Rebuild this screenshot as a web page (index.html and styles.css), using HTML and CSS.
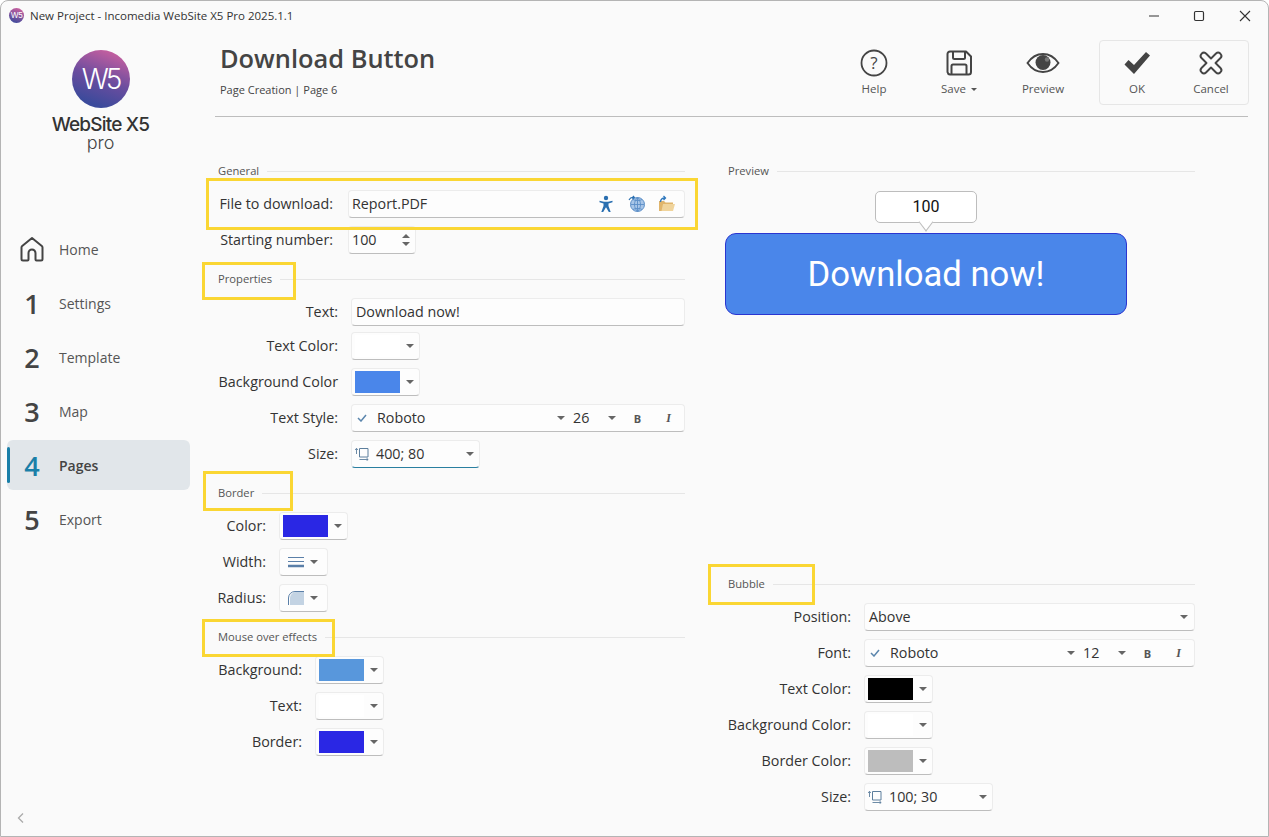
FILE: index.html
```html
<!DOCTYPE html>
<html lang="en">
<head>
<meta charset="utf-8">
<title>New Project - Incomedia WebSite X5 Pro 2025.1.1</title>
<link rel="stylesheet" href="styles.css">
</head>
<body>
<div class="window">
  <div class="titlebar">
    <span class="app-icon">W5</span>
    <span class="app-title">New Project - Incomedia WebSite X5 Pro 2025.1.1</span>
    <div class="win-controls">
      <svg class="win-btn win-min" width="12" height="12" viewBox="0 0 12 12"><path d="M1 6h10" stroke="#333" stroke-width="1.2"/></svg>
      <svg class="win-btn win-max" width="12" height="12" viewBox="0 0 12 12"><rect x="1.5" y="1.5" width="9" height="9" rx="1.2" fill="none" stroke="#333" stroke-width="1.2"/></svg>
      <svg class="win-btn win-close" width="12" height="12" viewBox="0 0 12 12"><path d="M1 1l10 10M11 1L1 11" stroke="#333" stroke-width="1.1"/></svg>
    </div>
  </div>
  <div class="body">
    <aside class="sidebar">
      <div class="logo">
        <div class="logo-mark">W5</div>
        <div class="logo-name">WebSite X5</div>
        <div class="logo-pro">pro</div>
      </div>
      <nav class="nav">
        <div class="nav-item"><span class="nav-num"><svg width="28" height="28" viewBox="0 0 28 28"><path d="M5 25.5h4.5a1 1 0 0 0 1-1V18a3.5 3.5 0 0 1 7 0v6.500a1 1 0 0 0 1 1H23a1.500 1.500 0 0 0 1.500-1.500V12.500a2 2 0 0 0-.7-1.500L14 3 4.200 11a2 2 0 0 0-.7 1.500V24A1.500 1.500 0 0 0 5 25.500z" fill="none" stroke="#444" stroke-width="2" stroke-linejoin="round"/></svg></span><span class="nav-label">Home</span></div>
        <div class="nav-item"><span class="nav-num">1</span><span class="nav-label">Settings</span></div>
        <div class="nav-item"><span class="nav-num">2</span><span class="nav-label">Template</span></div>
        <div class="nav-item"><span class="nav-num">3</span><span class="nav-label">Map</span></div>
        <div class="nav-item nav-active"><span class="nav-num">4</span><span class="nav-label">Pages</span></div>
        <div class="nav-item"><span class="nav-num">5</span><span class="nav-label">Export</span></div>
      </nav>
      <svg class="back" width="8" height="12" viewBox="0 0 8 12"><path d="M6 1.500L1.500 6 6 10.500" fill="none" stroke="#aaa" stroke-width="1.300"/></svg>
    </aside>
    <main class="main">
      <header class="header">
        <div class="heading">
          <h1 class="title">Download Button</h1>
          <div class="subtitle">Page Creation | Page 6</div>
        </div>
        <div class="toolbar">
          <div class="tool tool-help">
            <svg width="32" height="32" viewBox="0 0 32 32"><circle cx="16" cy="16" r="12.500" fill="none" stroke="#444" stroke-width="1.800"/><text x="16" y="22" text-anchor="middle" class="help-q">?</text></svg>
            <span class="tool-label">Help</span>
          </div>
          <div class="tool">
            <svg width="32" height="32" viewBox="0 0 32 32"><path d="M7 4.500h16l5 5V25a2.500 2.500 0 0 1-2.500 2.500h-18.500A3 3 0 0 1 4.500 25V7A2.500 2.500 0 0 1 7 4.500z" fill="none" stroke="#444" stroke-width="2" stroke-linejoin="round"/><path d="M10 4.500v6a1.500 1.500 0 0 0 1.500 1.500h9a1.500 1.500 0 0 0 1.500-1.500v-6M8.500 27.500V19a1.500 1.500 0 0 1 1.500-1.500h12a1.500 1.500 0 0 1 1.500 1.500v8.500" fill="none" stroke="#444" stroke-width="2"/></svg>
            <span class="tool-label">Save <span class="mini-caret"></span></span>
          </div>
          <div class="tool">
            <svg width="34" height="32" viewBox="0 0 34 32"><path d="M1.500 16C6 9.500 11 7 17 7s11 2.500 15.500 9C28 22.500 23 25 17 25S6 22.500 1.500 16z" fill="none" stroke="#444" stroke-width="1.900"/><circle cx="17" cy="15.500" r="7.500" fill="#444"/><circle cx="21" cy="12.500" r="2.200" fill="#777"/></svg>
            <span class="tool-label">Preview</span>
          </div>
          <div class="tool-panel">
            <div class="tool tool-small">
              <svg width="32" height="32" viewBox="0 0 32 32"><path d="M3.500 17.500l4-4.500 5.500 5L25 5l4 3.500L13 27z" fill="#444"/></svg>
              <span class="tool-label">OK</span>
            </div>
            <div class="tool tool-small">
              <svg width="32" height="32" viewBox="0 0 32 32"><path d="M9 5.500a3 3 0 0 1 2 1L16 11.500l5-5a3 3 0 0 1 4.200 0l.3.300a3 3 0 0 1 0 4.200L20.500 16l5 5a3 3 0 0 1 0 4.200l-.3.300a3 3 0 0 1-4.200 0l-5-5-5 5a3 3 0 0 1-4.200 0l-.3-.3a3 3 0 0 1 0-4.200l5-5-5-5a3 3 0 0 1 0-4.200l.3-.3a3 3 0 0 1 2.200-1z" fill="none" stroke="#444" stroke-width="1.900" stroke-linejoin="round"/></svg>
              <span class="tool-label">Cancel</span>
            </div>
          </div>
        </div>
      </header>

      <div class="form">
        <div class="col">
          <section class="section">
            <div class="sec-title"><span>General</span></div>
            <div class="rows rows-general">
              <label class="lbl">File to download:</label>
              <div class="ctrl ctrl-wide ctrl-file">
                <span class="val">Report.PDF</span>
                <span class="file-icons">
                  <svg class="ico-person" width="16" height="18" viewBox="0 0 16 18"><circle cx="8" cy="3" r="2.200" fill="#2a6fb0"/><path d="M1.500 5.800L6 6.800h4l4.500-1v1.500L10.500 8.500V11l2.200 6h-1.900L8 12.300 5.200 17H3.300l2.200-6V8.500L1.500 7.300z" fill="#2a6fb0"/></svg>
                  <svg width="18" height="18" viewBox="0 0 18 18"><circle cx="9.500" cy="9.500" r="7" fill="#a9c6e8" stroke="#5c8fc7"/><path d="M3 9.500h13M9.500 2.500v14M5 4.500c2.500 1.500 6.500 1.500 9 0M5 14.500c2.500-1.500 6.500-1.500 9 0M9.500 2.500c-4 4-4 10 0 14M9.500 2.500c4 4 4 10 0 14" fill="none" stroke="#5c8fc7" stroke-width=".9"/><path d="M1 5c1-2 3-3 5-2.500M5 1l1.300 1.500L4.500 4" fill="none" stroke="#2a6fb0" stroke-width="1.200"/></svg>
                  <svg width="18" height="18" viewBox="0 0 18 18"><path d="M1 16V6h5l1.500 1.500H15V16z" fill="#e0b56c"/><path d="M3.500 16L5 9h12l-2 7z" fill="#f0d49c"/><path d="M2.500 7c0-2.500 1.500-4 4.500-4M5.500 1L7.500 3 5.500 5" fill="none" stroke="#2f78bd" stroke-width="1.300"/></svg>
                </span>
              </div>
              <label class="lbl">Starting number:</label>
              <div class="ctrl ctrl-spin">
                <span class="val">100</span>
                <span class="spin"><i class="arrow-up"></i><i class="caret caret-spin"></i></span>
              </div>
            </div>
          </section>

          <section class="section">
            <div class="sec-title"><span>Properties</span></div>
            <div class="rows rows-props">
              <label class="lbl row-tight">Text:</label>
              <div class="ctrl ctrl-wide ctrl-text row-tight"><span class="val">Download now!</span></div>
              <label class="lbl">Text Color:</label>
              <div class="ctrl ctrl-color"><span class="swatch sw-white"></span><i class="caret"></i></div>
              <label class="lbl">Background Color</label>
              <div class="ctrl ctrl-color"><span class="swatch sw-blue"></span><i class="caret"></i></div>
              <label class="lbl">Text Style:</label>
              <div class="ctrl ctrl-wide ctrl-font">
                <svg class="chk" width="10" height="8" viewBox="0 0 10 8"><path d="M1 4l3 3 5-6" fill="none" stroke="#5b86ad" stroke-width="1.500"/></svg>
                <span class="val font-name">Roboto</span><i class="caret"></i>
                <span class="val font-size">26</span><i class="caret"></i>
                <b class="fmt fmt-b">B</b><i class="fmt fmt-i">I</i>
              </div>
              <label class="lbl">Size:</label>
              <div class="ctrl ctrl-size ctrl-focus">
                <svg class="size-ico" width="14" height="14" viewBox="0 0 14 14"><path d="M4.500 1.500h8.500v8.500H4.500z" fill="none" stroke="#5d7f9d"/><path d="M1.500 7V1.500M.2 3L1.500 1.300 2.800 3M4.500 12.500H13M11.500 11.200l1.700 1.300-1.700 1.300" fill="none" stroke="#5d7f9d" stroke-width=".9"/></svg>
                <span class="val">400; 80</span><i class="caret"></i>
              </div>
            </div>
          </section>

          <section class="section">
            <div class="sec-title"><span>Border</span></div>
            <div class="rows rows-border">
              <label class="lbl">Color:</label>
              <div class="ctrl ctrl-color"><span class="swatch sw-indigo"></span><i class="caret"></i></div>
              <label class="lbl">Width:</label>
              <div class="ctrl ctrl-icon">
                <svg width="16" height="12" viewBox="0 0 16 12"><path d="M0 1.500h16M0 5.500h16" stroke="#5a7fa8"/><path d="M0 10h16" stroke="#5a7fa8" stroke-width="2.500"/></svg>
                <i class="caret"></i>
              </div>
              <label class="lbl">Radius:</label>
              <div class="ctrl ctrl-icon">
                <svg width="16" height="14" viewBox="0 0 16 14"><path d="M2 14V7a6 6 0 0 1 6-6h8v13z" fill="#c3d3e3"/><path d="M.5 14V7A6.500 6.500 0 0 1 7 .5h9" fill="none" stroke="#5a7fa8"/></svg>
                <i class="caret"></i>
              </div>
            </div>
          </section>

          <section class="section">
            <div class="sec-title"><span>Mouse over effects</span></div>
            <div class="rows rows-mouse">
              <label class="lbl">Background:</label>
              <div class="ctrl ctrl-color"><span class="swatch sw-sky"></span><i class="caret"></i></div>
              <label class="lbl">Text:</label>
              <div class="ctrl ctrl-color"><span class="swatch sw-white"></span><i class="caret"></i></div>
              <label class="lbl">Border:</label>
              <div class="ctrl ctrl-color"><span class="swatch sw-indigo"></span><i class="caret"></i></div>
            </div>
          </section>
        </div>

        <div class="col">
          <section class="section section-preview">
            <div class="sec-title"><span>Preview</span></div>
            <div class="preview">
              <div class="bubble">100</div>
              <div class="dl-button">Download now!</div>
            </div>
          </section>

          <section class="section">
            <div class="sec-title"><span>Bubble</span></div>
            <div class="rows rows-bubble">
              <label class="lbl">Position:</label>
              <div class="ctrl ctrl-wide ctrl-select"><span class="val">Above</span><i class="caret"></i></div>
              <label class="lbl">Font:</label>
              <div class="ctrl ctrl-wide ctrl-font">
                <svg class="chk" width="10" height="8" viewBox="0 0 10 8"><path d="M1 4l3 3 5-6" fill="none" stroke="#5b86ad" stroke-width="1.500"/></svg>
                <span class="val font-name">Roboto</span><i class="caret"></i>
                <span class="val font-size">12</span><i class="caret"></i>
                <b class="fmt fmt-b">B</b><i class="fmt fmt-i">I</i>
              </div>
              <label class="lbl">Text Color:</label>
              <div class="ctrl ctrl-color"><span class="swatch sw-black"></span><i class="caret"></i></div>
              <label class="lbl">Background Color:</label>
              <div class="ctrl ctrl-color"><span class="swatch sw-white"></span><i class="caret"></i></div>
              <label class="lbl">Border Color:</label>
              <div class="ctrl ctrl-color"><span class="swatch sw-gray"></span><i class="caret"></i></div>
              <label class="lbl">Size:</label>
              <div class="ctrl ctrl-size">
                <svg class="size-ico" width="14" height="14" viewBox="0 0 14 14"><path d="M4.500 1.500h8.500v8.500H4.500z" fill="none" stroke="#5d7f9d"/><path d="M1.500 7V1.500M.2 3L1.500 1.300 2.800 3M4.500 12.500H13M11.500 11.200l1.700 1.300-1.700 1.300" fill="none" stroke="#5d7f9d" stroke-width=".9"/></svg>
                <span class="val">100; 30</span><i class="caret"></i>
              </div>
            </div>
          </section>
        </div>

        <div class="mark mark-file"></div>
        <div class="mark mark-props"></div>
        <div class="mark mark-border"></div>
        <div class="mark mark-mouse"></div>
        <div class="mark mark-bubble"></div>
      </div>
    </main>
  </div>
</div>
</body>
</html>
```
FILE: styles.css
```css
* { box-sizing: border-box; }
html, body { margin: 0; padding: 0; background: #fff; }
body { font-family: "Open Sans", "Noto Sans", sans-serif; color: #333; overflow: hidden; }

.window {
  width: 1269px; height: 837px;
  display: flex; flex-direction: column;
  background: #fafafa;
  border: 1px solid #b4b4b4;
  border-radius: 8px 8px 0 0;
  overflow: hidden;
}

/* Title bar */
.titlebar { height: 29px; flex: none; display: flex; align-items: center; padding-left: 8px; }
.app-icon {
  width: 15px; height: 15px; border-radius: 50%;
  background: linear-gradient(20deg, #3f4a9c 10%, #c9609f 90%);
  color: #fff; font: 400 8px/15px "Inter", sans-serif; letter-spacing: -.6px; text-align: center;
}
.app-title { margin-left: 6px; font-size: 11.5px; color: #333; }
.win-controls { margin-left: auto; display: flex; align-items: center; }
.win-btn { display: block; }
.win-min { margin-right: 33px; }
.win-max { margin-right: 34px; }
.win-close { margin-right: 17px; }

/* Layout */
.body { flex: 1; display: flex; min-height: 0; }
.sidebar { width: 199px; flex: none; display: flex; flex-direction: column; padding-left: 6px; }
.main { flex: 1; padding-right: 20px; min-width: 0; }

/* Logo */
.logo { margin-left: -6px; padding-top: 20px; height: 194px; display: flex; flex-direction: column; align-items: center; }
.logo-mark {
  width: 58px; height: 58px; border-radius: 50%;
  background: linear-gradient(20deg, #3b4a9b 15%, #6b4d9f 50%, #d0619f 95%);
  color: #fff; font: 300 28px/58px "Inter", sans-serif; letter-spacing: -3px; text-align: center;
}
.logo-name { margin-top: 7px; font: 500 19px/20px "Inter", sans-serif; letter-spacing: -.8px; color: #333; }
.logo-pro { font: 300 18px/16px "Inter", sans-serif; color: #444; }

/* Nav */
.nav { display: flex; flex-direction: column; gap: 4px; width: 183px; }
.nav-item { position: relative; height: 50px; display: flex; align-items: center; border-radius: 6px; }
.nav-num {
  width: 50px; margin-right: 2px; text-align: center; display: flex; justify-content: center; align-items: center;
  font-size: 27px; font-weight: 600; color: #444;
}
.nav-label { font-size: 14px; color: #555; }
.nav-active { background: #e1e6ea; }
.nav-active::before { content: ""; position: absolute; left: 0; top: 7px; bottom: 7px; width: 3px; border-radius: 2px; background: #1a7fa8; }
.nav-active .nav-num { color: #1a7fa8; }
.nav-active .nav-label { font-weight: 600; color: #444; }
.back { margin: auto 0 12px 10px; }

/* Header */
.header {
  height: 87px; margin-left: 15px;
  display: flex; justify-content: space-between;
  border-bottom: 1px solid #bdbdbd;
}
.heading { padding: 11px 0 0 5px; }
.title { margin: 0; font-size: 25.4px; line-height: 34px; font-weight: 600; color: #444; }
.subtitle { margin-top: 7px; font-size: 11px; line-height: 16px; color: #444; }
.toolbar { display: flex; margin-right: -1px; padding-top: 10px; align-items: flex-start; }
.tool { width: 84px; display: flex; flex-direction: column; align-items: center; padding-top: 7px; }
.tool-help { padding-right: 2px; }
.tool-small { width: 74px; padding-top: 6px; }
.tool svg { height: 32px; display: block; }
.tool-label { margin-top: 2px; font-size: 11.5px; line-height: 16px; color: #555; white-space: nowrap; }
.mini-caret { display: inline-block; margin-left: 2px; vertical-align: 2px; border: 3px solid transparent; border-top-color: #555; border-bottom-width: 0; }
.tool-panel { display: flex; margin-left: 14px; height: 65px; border: 1px solid #e6e6e6; border-radius: 4px; }
.help-q { font: 400 17px "Open Sans", sans-serif; fill: #444; }

/* Form */
.form { position: relative; display: flex; gap: 43px; padding: 46px 0 0 18px; width: 996px; }
.col { width: 467px; flex: none; }
.section + .section { margin-top: 17px; }
.section-preview { height: 396px; }
.sec-title { display: flex; align-items: center; height: 16px; font-size: 11.2px; line-height: 16px; color: #555; }
.sec-title span { white-space: nowrap; }
.sec-title::after { content: ""; flex: 1; height: 1px; margin-left: 8px; background: #e6e6e6; }

.rows { display: grid; column-gap: 13px; row-gap: 8px; margin-top: 11px; justify-items: start; }
.rows-general { grid-template-columns: 115px minmax(0, 1fr); column-gap: 15px; }
.rows-props { grid-template-columns: 120px minmax(0, 1fr); }
.rows-border { grid-template-columns: 48px minmax(0, 1fr); }
.rows-mouse { grid-template-columns: 84px minmax(0, 1fr); }
.rows-bubble { grid-template-columns: 123px minmax(0, 1fr); }
.lbl { justify-self: end; font-size: 14.3px; line-height: 27px; height: 28px; color: #333; white-space: nowrap; }
.row-tight { margin-bottom: -2px; }

/* Controls */
.ctrl {
  position: relative; height: 28px; display: flex; align-items: center;
  background: #fdfdfd;
  border: 1px solid #ececec; border-bottom-color: #bdbdbd;
  border-radius: 4px;
}
.val { font-size: 14.3px; color: #333; white-space: nowrap; padding-bottom: 2px; }
.ctrl-wide { width: 100%; }
.ctrl-file { padding-left: 3px; }
.file-icons { margin-left: auto; padding-right: 8px; display: flex; align-items: center; gap: 12px; }
.file-icons svg { display: block; }
.ico-person { margin-right: 2px; }
.ctrl-spin { width: 68px; padding-left: 3px; }
.spin { margin-left: auto; margin-right: 5px; display: flex; flex-direction: column; gap: 4px; }
.arrow-up { display: block; border: 4px solid transparent; border-bottom: 4px solid #666; border-top-width: 0; }
.caret-spin { margin: 0; }
.ctrl-text { padding-left: 4px; }
.ctrl-select { padding-left: 4px; }
.ctrl-select .caret { margin-left: auto; margin-right: 6px; }
.caret { display: block; flex: none; width: 0; height: 0; border: 4px solid transparent; border-top: 4px solid #666; border-bottom-width: 0; }

.ctrl-color { width: 69px; padding-left: 3px; }
.ctrl-color .caret { margin-left: 6px; }
.swatch { display: block; width: 45px; height: 22px; }
.sw-white { background: #fff; }
.sw-blue { background: #4a86ea; }
.sw-indigo { background: #2a27e4; }
.sw-sky { background: #5897dc; }
.sw-black { background: #000; }
.sw-gray { background: #bdbdbd; }

.ctrl-icon { width: 49px; padding-left: 8px; }
.ctrl-icon .caret { margin-left: 6px; }

.ctrl-font { padding-left: 5px; }
.chk { flex: none; margin-right: 10px; }
.font-name { flex: 1; min-width: 0; }
.font-size { flex: none; width: 35px; margin-left: 8px; }
.fmt { flex: none; width: 31px; text-align: center; font-family: "Liberation Serif", serif; font-size: 12px; color: #555; font-weight: 700; }
.fmt-b { margin-left: 6px; font-family: "Open Sans", sans-serif; font-size: 11px; }
.fmt-i { font-style: italic; }

.ctrl-size { width: 129px; padding-left: 3px; }
.ctrl-size .val { margin-left: 7px; }
.ctrl-size .caret { margin-left: auto; margin-right: 5px; }
.ctrl-focus { border-bottom-color: #2a7fa0; }
.size-ico { display: block; flex: none; }

/* Preview */
.preview { width: 402px; margin: 12px 0 0 -3px; display: flex; flex-direction: column; align-items: center; }
.bubble {
  position: relative; width: 102px; height: 32px;
  background: #fff; border: 1px solid #bdbdbd; border-radius: 5px;
  font: 400 16px/30px "Roboto", sans-serif; text-align: center; color: #111;
}
.bubble::after {
  content: ""; position: absolute; left: 44px; bottom: -6px; width: 11px; height: 11px;
  background: #fff; border-right: 1px solid #bdbdbd; border-bottom: 1px solid #bdbdbd;
  transform: rotate(45deg) skew(8deg, 8deg);
}
.dl-button {
  width: 402px; height: 82px; margin-top: 10px;
  background: #4a86ea; border: 1px solid #2a35d0; border-radius: 11px;
  font: 400 34.67px/80px "Roboto", sans-serif; color: #fff; text-align: center;
}

/* Yellow annotations over the form */
.mark { position: absolute; border: 3px solid #fad633; pointer-events: none; }
.mark-file { left: 6px; top: 61px; width: 492px; height: 52px; }
.mark-props { left: 2px; top: 145px; width: 94px; height: 38px; }
.mark-border { left: 3px; top: 354px; width: 90px; height: 40px; }
.mark-mouse { left: 2px; top: 502px; width: 133px; height: 38px; }
.mark-bubble { left: 508px; top: 447px; width: 107px; height: 41px; }
```
